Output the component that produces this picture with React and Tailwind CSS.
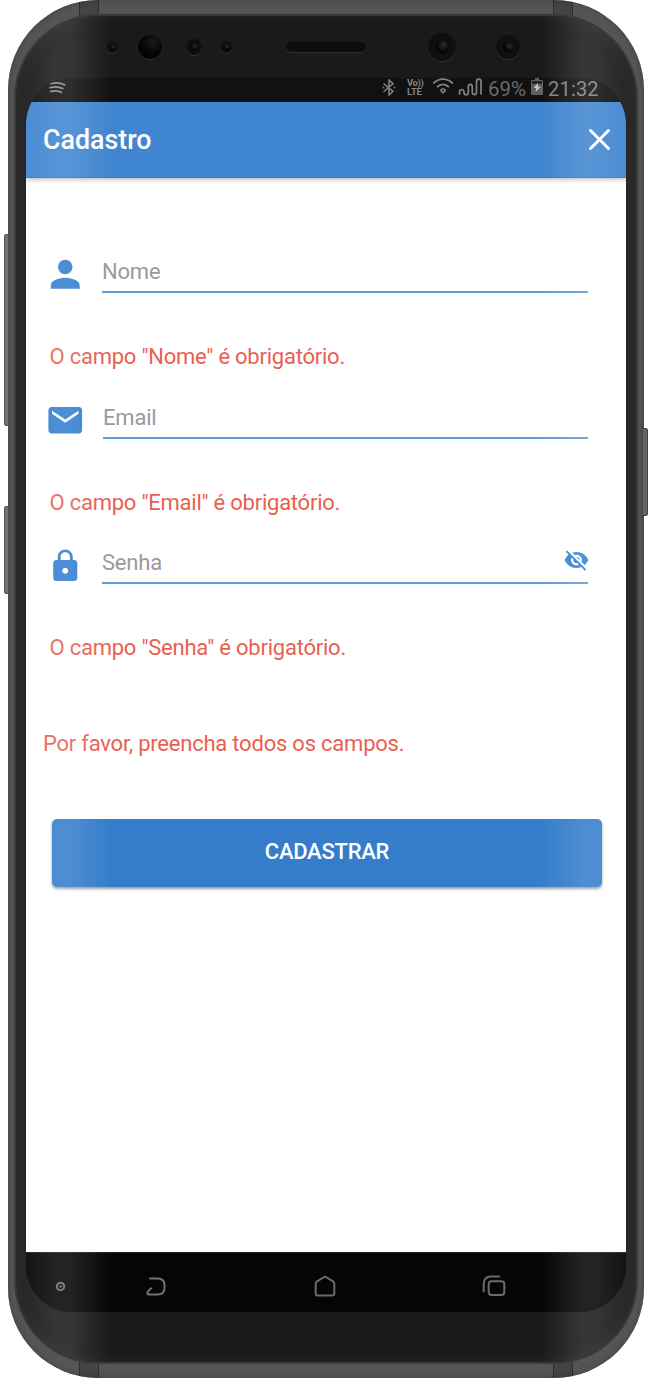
import React from "react";
import { IoMdPerson, IoMdMail, IoMdLock, IoMdEyeOff } from "react-icons/io";

function Lens({ className, glint }) {
  return (
    <span className={"flex shrink-0 items-center justify-center rounded-full shadow-[0_1px_1px_rgba(255,255,255,0.10)] " + className}>
      <span className={"rounded-full bg-[radial-gradient(circle_at_60%_35%,#2c2c2c_0%,#070707_50%,#020202_100%)] " + glint} />
    </span>
  );
}

function Sensors() {
  return (
    <div className="flex h-[62px] items-center pl-[80px]">
      <Lens className="size-3 bg-[#111]" glint="size-[7px]" />
      <span className="ml-5 size-6 shrink-0 rounded-full bg-[radial-gradient(circle_at_62%_30%,#1c1c1c_0%,#060606_45%,#020202_100%)] shadow-[0_1px_1px_rgba(255,255,255,0.10)]" />
      <Lens className="ml-6 size-4 bg-[#0e0e0e]" glint="size-2" />
      <Lens className="ml-[18px] size-3 bg-[#0e0e0e]" glint="size-[7px]" />
      <span className="ml-[54px] h-[10px] w-20 shrink-0 rounded-full bg-[#0d0d0d] shadow-[0_1px_1px_rgba(255,255,255,0.10)]" />
      <Lens className="ml-[62px] size-7 bg-[#0f0f0f]" glint="size-[14px]" />
      <Lens className="ml-10 size-6 bg-[#0f0f0f]" glint="size-[11px]" />
    </div>
  );
}

function StatusBar() {
  return (
    <div className="flex h-6 items-start bg-[#111] text-[#828282]">
      <svg className="ml-[22px] mt-[4px] h-3 w-[18px]" viewBox="0 0 18 12" fill="none" stroke="#8d8d8d" strokeLinecap="round">
        <path d="M2.500 1.800C7 .6 12 .6 16.500 2.800" strokeWidth="1.700" />
        <path d="M2 5.700C6 4.500 10.500 4.600 14.800 6.600" strokeWidth="1.700" />
        <path d="M2.700 9.500C6 8.600 10 8.600 13.300 10.300" strokeWidth="1.700" />
      </svg>
      <svg className="ml-[316px] mt-px h-[17px] w-[14px]" viewBox="0 0 14 17" fill="none" stroke="#828282" strokeWidth="1.500">
        <path d="M1.500 4.500 11 12.300 7 16V1l4 3.700-9.500 8" />
        <path d="M.7 8.500h1.500M11.800 8.500h1.500" strokeWidth="1.700" />
      </svg>
      <div className="ml-[11px] flex w-[18px] flex-col text-[9.5px] leading-[9px] font-bold">
        <span className="tracking-[-0.4px]">Vo))</span>
        <span className="tracking-[-0.2px]">LTE</span>
      </div>
      <svg className="ml-[7px] mt-0 h-[17px] w-[22px]" viewBox="0 0 22 17" fill="none" stroke="#828282" strokeWidth="1.900">
        <path d="M1.300 5.500C7-.3 15-.3 20.700 5.500" />
        <path d="M5 9.200c3.600-3.600 8.400-3.600 12 0" />
        <path d="M8.500 12.200c1.600-1.500 3.400-1.500 5 0L11 14.800z" strokeWidth="1.500" />
      </svg>
      <svg className="ml-[4px] mt-0 h-[18px] w-[25px]" viewBox="0 0 25 18" fill="none" stroke="#828282" strokeWidth="1.700" strokeLinecap="round">
        <path d="M1.500 16v-1.500c0-4 4.500-4 4.500 0 0 3 4.300 3 4.300 0V9c0-3.500 4-3.500 4 0v5c0 3.500 4.200 3.500 4.200 0V3.500c0-3.200 4.500-3.200 4.500 0V16" />
      </svg>
      <span className="ml-[5px] mt-px w-[39px] text-[20.500px] leading-[20px] text-[#6a6a6a]">69%</span>
      <svg className="ml-[4px] mt-0 h-[17px] w-3" viewBox="0 0 12 17">
        <path d="M4 0h4v2h3q1 0 1 1v13q0 1-1 1H1q-1 0-1-1V3q0-1 1-1h3z" fill="#606060" />
        <path d="M1 6V3h10v3z" fill="#262626" />
        <path d="M7 5 2.500 10h2.700l-.7 4L10 8.800H7z" fill="#c5c5c5" />
      </svg>
      <span className="ml-[5px] mt-px text-[20px] leading-[20px] tracking-[0.2px]">21:32</span>
    </div>
  );
}

function Header() {
  return (
    <header className="relative flex h-[76px] items-center justify-between border-b border-[#2f79cc] bg-[#4085d0] pr-[15px] pl-[17px] shadow-[0_1px_5px_rgba(0,0,0,0.35)]">
      <h1 className="pt-px text-[26.8px] leading-8 font-medium text-white">Cadastro</h1>
      <svg className="size-[23px]" viewBox="0 0 23 23" stroke="#fff" strokeWidth="3" strokeLinecap="round">
        <path d="M2.500 2.500 20.500 20.500M20.500 2.500 2.500 20.500" />
      </svg>
    </header>
  );
}

function Field({ icon: Icon, label, error, indent, action }) {
  return (
    <div className="h-[145.500px]">
      <div className="flex h-[47px] items-start pl-[20px]">
        <span className="flex w-[39px] shrink-0">
          <Icon className="mt-[9px] size-[38.500px] text-[#347fcf]" />
        </span>
        <label className={"flex h-[47px] flex-1 items-start justify-between border-b-2 border-[#5f9bd9] mr-[38px] " + indent}>
          <span className="mt-[13px] text-[22px] leading-[26px] tracking-[-0.2px] text-[#9a9a9a]">{label}</span>
          {action}
        </label>
      </div>
      <p className="mt-[51px] pl-[23.500px] text-[22px] leading-[26px] tracking-[-0.23px] whitespace-nowrap text-[#e9604f]">{error}</p>
    </div>
  );
}

function Nav() {
  return (
    <nav className="flex h-[60px] items-center border-t border-[#222] bg-[#050505]">
      <svg className="mt-[8px] ml-[29px] size-[11px]" viewBox="0 0 11 11">
        <circle cx="5.500" cy="5.500" r="3.700" fill="none" stroke="#6f6f6f" strokeWidth="2" />
        <circle cx="5.500" cy="5.500" r="1.200" fill="#6f6f6f" />
      </svg>
      <svg className="mt-[8px] ml-[80px] h-5 w-5" viewBox="0 0 20 20" fill="none" stroke="#737373" strokeWidth="2" strokeLinecap="round" strokeLinejoin="round">
        <path d="M4 1.500h7.500q7 0 7 6.500v3q0 6.500-7 6.500H2.500q-1.500-.5-1-2 1.500-2.500 3.800-4.200" />
      </svg>
      <svg className="mt-[6px] ml-[148px] h-[22px] w-[22px]" viewBox="0 0 22 22" fill="none" stroke="#6b6b6b" strokeWidth="2" strokeLinejoin="round">
        <path d="M11 1.500 3 6.400Q1.700 7.300 1.700 9v9.500Q1.700 20.500 3.700 20.500h14.600q2 0 2-2V9q0-1.700-1.300-2.600z" />
      </svg>
      <svg className="mt-[7px] ml-[146px] h-[22px] w-6" viewBox="0 0 24 22" fill="none" stroke="#6b6b6b" strokeWidth="2" strokeLinecap="round">
        <path d="M1.700 16.500V9q0-7.500 7.500-7.500h8" />
        <rect x="6.700" y="6.300" width="15.600" height="13.700" rx="3" />
      </svg>
    </nav>
  );
}

export default function App() {
  return (
    <div className="relative h-[1378px] w-[652px] overflow-hidden bg-white px-2 font-['Roboto',sans-serif]">
      <i className="absolute top-[234px] left-[4px] h-[192px] w-[6px] rounded-l-[2px] border border-[#565656] bg-[#727272]" />
      <i className="absolute top-[506px] left-[4px] h-[88px] w-[6px] rounded-l-[2px] border border-[#565656] bg-[#727272]" />
      <div className="relative h-[1378px] w-[636px] overflow-hidden rounded-[90px] bg-[#555] px-[6px] py-[14px] shadow-[inset_0_0_6px_#404040]">
        <i className="absolute top-0 left-[71px] h-full w-5 border-x border-black/30 bg-black/20" />
        <i className="absolute top-0 right-[71px] h-full w-5 border-x border-black/30 bg-black/20" />
        <div className="relative h-[1350px] rounded-[84px] border-2 border-[#3a3a3a] bg-[#1a1a1a] px-[10px] shadow-[inset_0_0_14px_#262626]">
          <Sensors />
          <div className="h-[1234px] overflow-hidden rounded-[46px] bg-[#111]">
            <StatusBar />
            <Header />
            <main className="h-[1074px] bg-white pt-[68px]">
              <Field icon={IoMdPerson} label="Nome" error={'O campo "Nome" é obrigatório.'} indent="ml-[17px]" />
              <Field icon={IoMdMail} label="Email" error={'O campo "Email" é obrigatório.'} indent="ml-[18px]" />
              <Field
                icon={IoMdLock}
                label="Senha"
                error={'O campo "Senha" é obrigatório.'}
                indent="ml-[17px]"
                action={<IoMdEyeOff className="mt-[10px] mr-[-2px] size-[27px] text-[#3a83d1]" />}
              />
              <p className="mt-[48px] pl-[17px] text-[22px] leading-[26px] tracking-[-0.22px] text-[#e9604f]">Por favor, preencha todos os campos.</p>
              <button className="mt-[62px] ml-[26px] flex h-[68px] w-[550px] items-center justify-center rounded-[5px] bg-[#357dcb] pb-[3px] text-[22px] font-medium tracking-[-0.25px] text-white shadow-[0_2px_3px_rgba(0,0,0,0.4)]">
                CADASTRAR
              </button>
            </main>
            <Nav />
          </div>
          <i className="pointer-events-none absolute inset-0 rounded-[82px] bg-[linear-gradient(90deg,rgba(255,255,255,0.05)_0px,rgba(255,255,255,0.06)_10px,rgba(255,255,255,0.12)_40px,rgba(255,255,255,0.12)_54px,transparent_96px,transparent_524px,rgba(255,255,255,0.12)_566px,rgba(255,255,255,0.12)_580px,rgba(255,255,255,0.06)_610px,rgba(255,255,255,0.05)_620px)]" />
        </div>
      </div>
      <i className="absolute top-[428px] right-[4px] h-[88px] w-[6px] rounded-r-[2px] border border-[#454545] bg-[#666]" />
    </div>
  );
}
